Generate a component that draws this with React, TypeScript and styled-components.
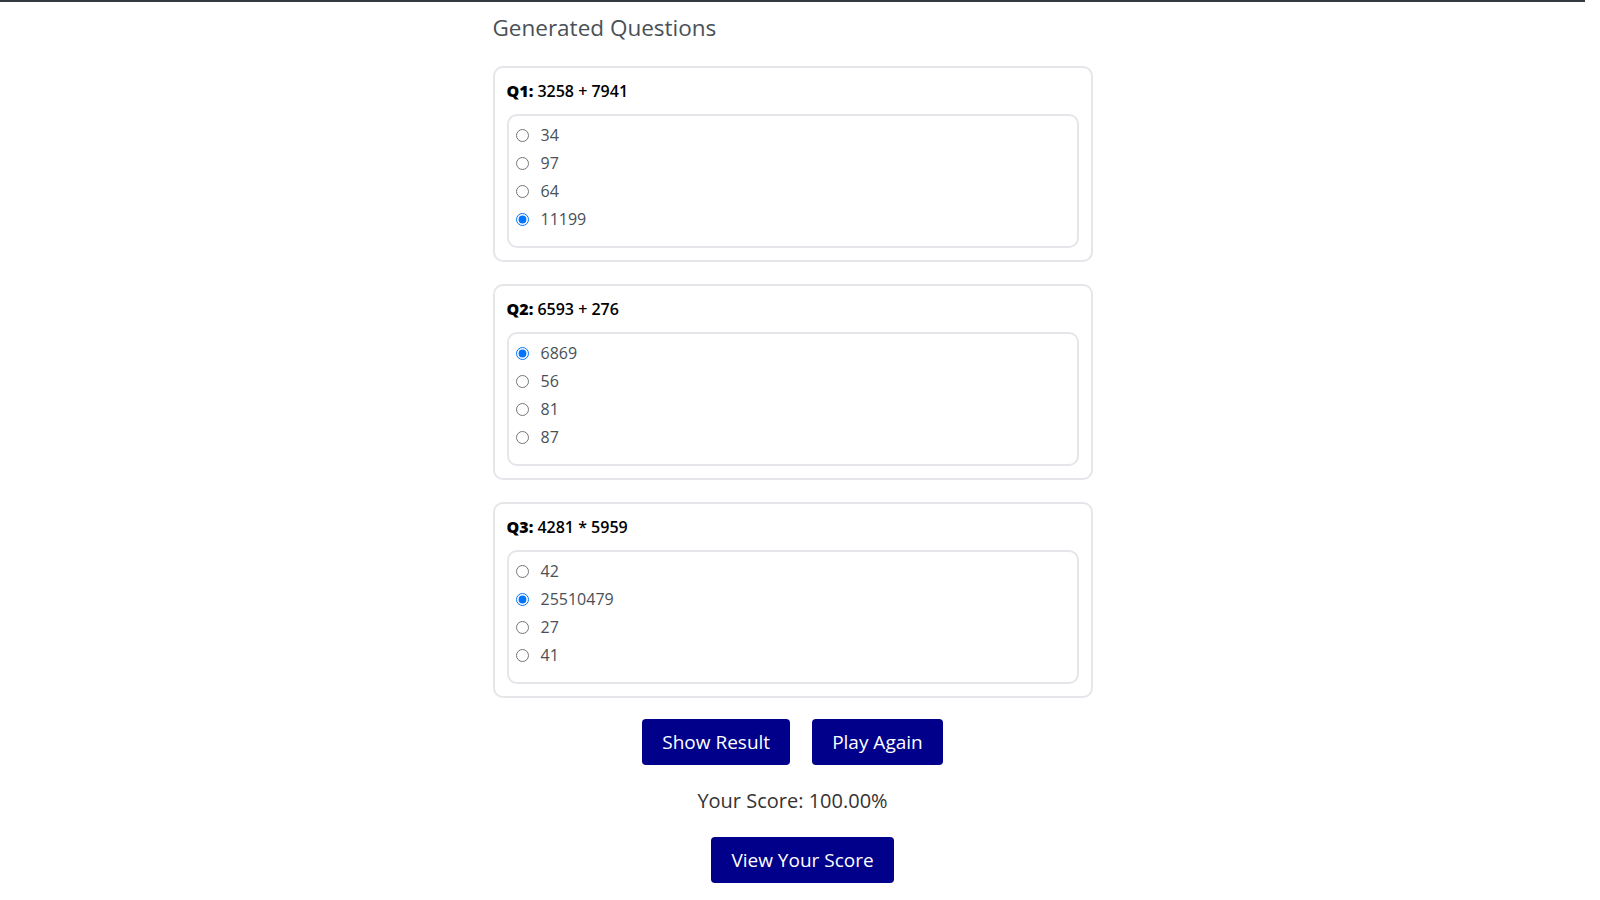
import React, { useLayoutEffect } from "react";
import styled, { createGlobalStyle } from "styled-components";

const GlobalStyle = createGlobalStyle`
  html, body {
    margin: 0;
    padding: 0;
    background: #ffffff;
    font-family: "Open Sans", "Liberation Sans", sans-serif;
  }
  * { box-sizing: border-box; }
`;

const Page = styled.div`
  padding-right: 15px;
`;

const TopBar = styled.header`
  height: 245px;
  background: #343a40;
`;

const Main = styled.main`
  width: 600px;
  margin: 0 auto;
  padding: 9px 0 17px;
`;

const Heading = styled.h2`
  margin: 0 0 22px;
  font-size: 22.5px;
  line-height: 33px;
  font-weight: 500;
  color: #495057;
`;

const Card = styled.section`
  border: 2px solid #e6e6ea;
  border-radius: 10px;
  padding: 11px 12px 12px;
  margin-bottom: 22px;
`;

const QuestionTitle = styled.div`
  font-size: 16px;
  line-height: 24px;
  font-weight: 600;
  color: #000000;
  margin-bottom: 11px;
`;

const QLabel = styled.span`
  font-weight: 800;
`;

const OptionBox = styled.div`
  border: 2px solid #e6e6ea;
  border-radius: 10px;
  padding: 8px 7px 10px 7px;
`;

const OptionRow = styled.label`
  display: flex;
  align-items: center;
  height: 22px;
  margin-bottom: 6px;
  font-size: 16px;
  color: #495057;
`;

const Radio = styled.input`
  width: 13px;
  height: 13px;
  margin: 0 12px 0 0;
`;

const ButtonRow = styled.div`
  display: flex;
  justify-content: center;
  gap: 22px;
  margin-top: -1px;
`;

const ActionButton = styled.button<{ $offset?: number }>`
  height: 46px;
  padding: 0 20px;
  margin-left: ${(p) => p.$offset ?? 0}px;
  border: none;
  border-radius: 4px;
  background: #00008b;
  color: #ffffff;
  font-family: inherit;
  font-size: 19px;
  cursor: pointer;
`;

const Score = styled.p`
  margin: 21px 0;
  text-align: center;
  font-size: 20px;
  line-height: 30px;
  color: #333333;
`;

const Center = styled.div`
  display: flex;
  justify-content: center;
`;

const questions = [
  { label: "Q1:", text: "3258 + 7941", options: ["34", "97", "64", "11199"], selected: 3 },
  { label: "Q2:", text: "6593 + 276", options: ["6869", "56", "81", "87"], selected: 0 },
  { label: "Q3:", text: "4281 * 5959", options: ["42", "25510479", "27", "41"], selected: 1 },
];

export default function App() {
  useLayoutEffect(() => {
    window.scrollTo(0, document.documentElement.scrollHeight);
    const t = setTimeout(() => window.scrollTo(0, document.documentElement.scrollHeight), 50);
    return () => clearTimeout(t);
  }, []);

  return (
    <Page>
      <GlobalStyle />
      <TopBar />
      <Main>
        <Heading>Generated Questions</Heading>
        {questions.map((q, qi) => (
          <Card key={qi}>
            <QuestionTitle>
              <QLabel>{q.label}</QLabel> {q.text}
            </QuestionTitle>
            <OptionBox>
              {q.options.map((o, oi) => (
                <OptionRow key={oi}>
                  <Radio type="radio" name={`q${qi}`} defaultChecked={oi === q.selected} />
                  {o}
                </OptionRow>
              ))}
            </OptionBox>
          </Card>
        ))}
        <ButtonRow>
          <ActionButton>Show Result</ActionButton>
          <ActionButton>Play Again</ActionButton>
        </ButtonRow>
        <Score>Your Score: 100.00%</Score>
        <Center>
          <ActionButton $offset={20}>View Your Score</ActionButton>
        </Center>
      </Main>
    </Page>
  );
}
